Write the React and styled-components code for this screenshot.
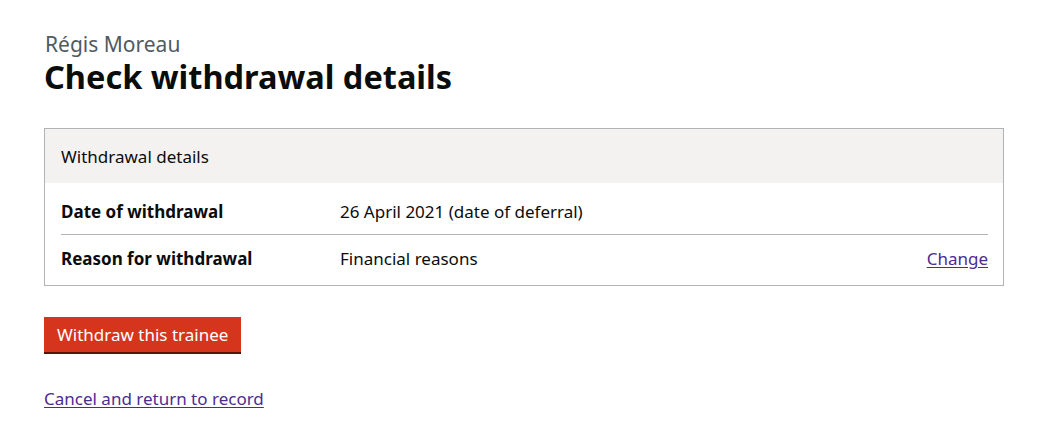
import styled, { createGlobalStyle } from "styled-components";

const GlobalStyle = createGlobalStyle`
    body {
        margin: 0;
        background: #fff;
        font-family: "Noto Sans", Arial, sans-serif;
        color: #0b0c0c;
    }
`;

const rows = [
    { key: "Date of withdrawal", value: "26 April 2021 (date of deferral)" },
    { key: "Reason for withdrawal", value: "Financial reasons", action: "Change" },
];

function App() {
    return (
        <>
            <GlobalStyle />
            <Page>
                <Caption>Régis Moreau</Caption>
                <Heading>Check withdrawal details</Heading>
                <Card>
                    <CardHeader>Withdrawal details</CardHeader>
                    <SummaryList>
                        {rows.map((row, i) => (
                            <Row key={row.key} $last={i === rows.length - 1}>
                                <Key>{row.key}</Key>
                                <Value>{row.value}</Value>
                                <Action>{row.action && <Link href="#">{row.action}</Link>}</Action>
                            </Row>
                        ))}
                    </SummaryList>
                </Card>
                <Button>Withdraw this trainee</Button>
                <FooterLink href="#">Cancel and return to record</FooterLink>
            </Page>
        </>
    );
}

export default App;

const Page = styled.div`
    padding: 31px 50px 0 44px;
    display: flex;
    flex-direction: column;
    align-items: flex-start;
`;

const Caption = styled.div`
    font-size: 21px;
    line-height: 26px;
    color: #505a5f;
    padding-left: 1px;
`;

const Heading = styled.h1`
    margin: 0 0 31px;
    font-size: 32.5px;
    line-height: 40px;
    font-weight: 700;
`;

const Card = styled.div`
    align-self: stretch;
    border: 1px solid #b1b4b6;
    margin-bottom: 31px;
`;

const CardHeader = styled.div`
    background: #f3f2f1;
    height: 54px;
    display: flex;
    align-items: center;
    padding: 0 16px;
    font-size: 17px;
`;

const SummaryList = styled.div`
    padding: 6px 15px 0 16px;
`;

const Row = styled.div`
    display: grid;
    grid-template-columns: 279px 1fr auto;
    align-items: center;
    height: ${(p) => (p.$last ? "46px" : "45px")};
    padding-bottom: ${(p) => (p.$last ? "4px" : "0")};
    border-bottom: ${(p) => (p.$last ? "none" : "1px solid #b1b4b6")};
    font-size: 17px;
`;

const Key = styled.div`
    font-weight: 700;
`;

const Value = styled.div``;

const Action = styled.div`
    text-align: right;
`;

const Link = styled.a`
    color: #4c2c92;
    text-decoration: underline;
    text-underline-offset: 2px;
`;

const Button = styled.button`
    font-family: inherit;
    font-size: 17px;
    color: #fff;
    background: #d4351c;
    border: none;
    box-shadow: 0 2px 0 #55150b;
    padding: 0 13px;
    height: 35px;
    margin-bottom: 35px;
    cursor: pointer;
`;

const FooterLink = styled(Link)`
    font-size: 17px;
`;
